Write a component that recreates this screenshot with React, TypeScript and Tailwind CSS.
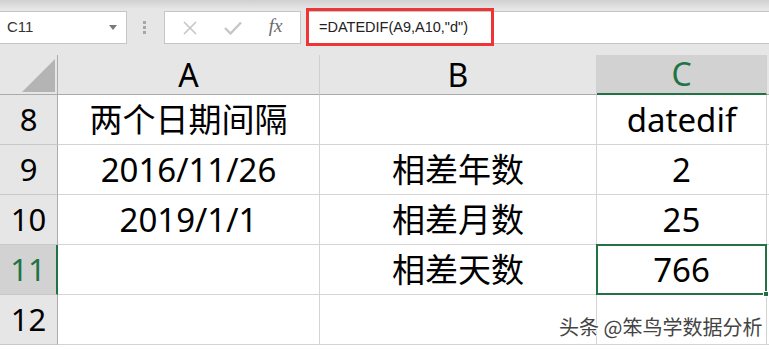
import React from "react";

const cellFont = { fontFamily: '"Noto Sans","Noto Sans CJK SC",sans-serif' };

function Cell({
  children,
  className = "",
}: {
  children?: React.ReactNode;
  className?: string;
}) {
  return (
    <div
      className={
        "flex items-center justify-center border-r border-b border-[#d4d4d4] bg-white text-[33px] text-black leading-none " +
        className
      }
    >
      {children}
    </div>
  );
}

function RowHead({ n, active = false }: { n: string; active?: boolean }) {
  return (
    <div
      className={
        "flex items-center justify-center border-b border-[#c8c8c8] text-[31px] leading-none " +
        (active
          ? "bg-[#d2d2d2] text-[#217346] border-r-2 border-r-[#217346]"
          : "bg-[#e6e6e6] text-black border-r border-r-[#ababab]")
      }
    >
      {n}
    </div>
  );
}

export default function App() {
  return (
    <div
      className="relative w-[769px] h-[350px] overflow-hidden bg-white"
      style={cellFont}
    >
      {/* toolbar */}
      <div className="h-[55px] bg-[linear-gradient(to_bottom,#d0d0d0_0px,#e6e6e6_9px)] pt-[11px]">
        <div className="flex h-[33px] items-stretch">
          <div
            className="w-[127px] flex items-center justify-between border border-l-0 border-[#c6c6c6] bg-white pl-[7px] pr-[9px] text-[15px] text-[#333]"
            style={{ fontFamily: '"Liberation Sans",sans-serif' }}
          >
            <span>C11</span>
            <svg width="8" height="5" viewBox="0 0 8 5">
              <path d="M0 0 L8 0 L4 5 Z" fill="#7a7a7a" />
            </svg>
          </div>
          <div className="w-[37px] flex flex-col items-center justify-center gap-[2px] pr-[2px]">
            <div className="w-[3px] h-[3px] bg-[#a6a6a6]" />
            <div className="w-[3px] h-[3px] bg-[#a6a6a6]" />
            <div className="w-[3px] h-[3px] bg-[#a6a6a6]" />
          </div>
          <div className="w-[137px] flex items-center border border-[#c6c6c6] bg-white">
            <div className="w-[47px] flex justify-center pl-[2px]">
              <svg width="14" height="14" viewBox="0 0 14 14">
                <path
                  d="M1 1 L13 13 M13 1 L1 13"
                  stroke="#c6c6c6"
                  strokeWidth="1.6"
                  fill="none"
                />
              </svg>
            </div>
            <div className="w-[42px] flex justify-center">
              <svg width="18" height="14" viewBox="0 0 18 14">
                <path
                  d="M1 7 L6.5 12.5 L17 1.5"
                  stroke="#c6c6c6"
                  strokeWidth="2.4"
                  fill="none"
                />
              </svg>
            </div>
            <div
              className="flex-1 flex justify-center text-[19px] italic text-[#6a6a6a] pr-[3px] pb-[2px]"
              style={{ fontFamily: '"Liberation Serif",serif' }}
            >
              fx
            </div>
          </div>
          <div className="w-[5px]" />
          <div
            className="flex-1 flex items-center border border-r-0 border-[#c6c6c6] bg-white pl-[12px] text-[14.5px] text-[#222]"
            style={{ fontFamily: '"Liberation Sans",sans-serif' }}
          >
            =DATEDIF(A9,A10,"d")
          </div>
        </div>
      </div>

      {/* red annotation */}
      <div className="absolute left-[306px] top-[8px] w-[188px] h-[38px] border-[3px] border-[#ee3535]" />

      {/* sheet */}
      <div className="grid grid-cols-[58px_262px_277px_170px_2px] grid-rows-[40px_50px_50px_50px_50px_50px]">
        {/* header row */}
        <div className="relative bg-[#e6e6e6] border-r border-b border-[#ababab]">
          <svg
            className="absolute left-[22px] top-[4px]"
            width="34"
            height="34"
            viewBox="0 0 34 34"
          >
            <path d="M33 0 L33 33 L0 33 Z" fill="#b4b4b4" />
          </svg>
        </div>
        <div className="flex items-center justify-center bg-[#e6e6e6] border-r border-r-[#d0d0d0] border-b border-b-[#ababab] text-[32px] leading-none text-black">
          A
        </div>
        <div className="flex items-center justify-center bg-[#e6e6e6] border-r border-r-[#d0d0d0] border-b border-b-[#ababab] text-[32px] leading-none text-black">
          B
        </div>
        <div className="flex items-center justify-center bg-[#d2d2d2] border-r border-r-[#d0d0d0] border-b-2 border-b-[#217346] text-[32px] leading-none text-[#217346]">
          C
        </div>
        <div className="bg-[#e6e6e6] border-b border-[#ababab]" />

        {/* row 8 */}
        <RowHead n="8" />
        <Cell>两个日期间隔</Cell>
        <Cell />
        <Cell>datedif</Cell>
        <div className="bg-white border-b border-[#d4d4d4]" />

        {/* row 9 */}
        <RowHead n="9" />
        <Cell>2016/11/26</Cell>
        <Cell>相差年数</Cell>
        <Cell>2</Cell>
        <div className="bg-white border-b border-[#d4d4d4]" />

        {/* row 10 */}
        <RowHead n="10" />
        <Cell>2019/1/1</Cell>
        <Cell>相差月数</Cell>
        <Cell>25</Cell>
        <div className="bg-white border-b border-[#d4d4d4]" />

        {/* row 11 */}
        <RowHead n="11" active />
        <Cell />
        <Cell>相差天数</Cell>
        <div className="relative -ml-[1px] -mt-[1px] flex items-center justify-center border-2 border-[#217346] bg-white text-[33px] leading-none text-black">
          766
          <div className="absolute -right-[4px] -bottom-[4px] w-[6px] h-[6px] bg-[#217346] border border-white" />
        </div>
        <div className="bg-white border-b border-[#d4d4d4]" />

        {/* row 12 */}
        <RowHead n="12" />
        <Cell />
        <Cell />
        <Cell />
        <div className="bg-white border-b border-[#d4d4d4]" />
      </div>

      {/* watermark */}
      <div
        className="absolute left-[559px] top-[317px] text-[20px] leading-none text-[#444] whitespace-nowrap"
        style={{
          fontFamily: '"Noto Sans CJK SC",sans-serif',
          textShadow:
            "1px 0 0 #fff, -1px 0 0 #fff, 0 1px 0 #fff, 0 -1px 0 #fff, 1px 1px 0 #fff, -1px -1px 0 #fff",
        }}
      >
        头条 @笨鸟学数据分析
      </div>
    </div>
  );
}
